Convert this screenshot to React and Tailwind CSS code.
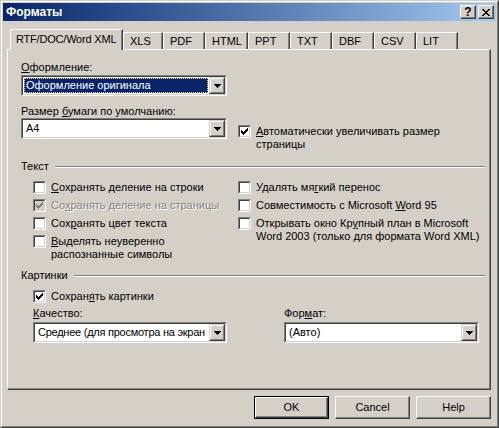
import React from "react";

const tabs = [
  { label: "RTF/DOC/Word XML", w: "w-[113px]", active: true },
  { label: "XLS", w: "w-[40px]" },
  { label: "PDF", w: "w-[42px]" },
  { label: "HTML", w: "w-[43px]" },
  { label: "PPT", w: "w-[42px]" },
  { label: "TXT", w: "w-[42px]" },
  { label: "DBF", w: "w-[42px]" },
  { label: "CSV", w: "w-[42px]" },
  { label: "LIT", w: "w-[42px]" }
];

function CheckMark({ color }) {
  // classic 7x7 pixel tick
  const px = [
    [6, 0], [5, 1], [6, 1], [0, 2], [4, 2], [5, 2], [6, 2],
    [0, 3], [1, 3], [3, 3], [4, 3], [5, 3], [0, 4], [1, 4], [2, 4], [3, 4], [4, 4],
    [1, 5], [2, 5], [3, 5], [2, 6]
  ];
  return (
    <svg width="7" height="7" viewBox="0 0 7 7" shapeRendering="crispEdges" className="block">
      {px.map(([x, y]) => (
        <rect key={`${x}-${y}`} x={x} y={y} width="1" height="1" fill={color} />
      ))}
    </svg>
  );
}

function Check({ checked, disabled }) {
  return (
    <span className="block h-[13px] w-[13px] shrink-0 border border-b-white border-l-[#808080] border-r-white border-t-[#808080]">
      <span
        className={[
          "flex h-full w-full items-center justify-center border border-b-[#d4d0c8] border-l-[#404040] border-r-[#d4d0c8] border-t-[#404040]",
          disabled ? "bg-[#d4d0c8]" : "bg-white"
        ].join(" ")}
      >
        {checked ? <CheckMark color={disabled ? "#808080" : "#000"} /> : null}
      </span>
    </span>
  );
}

function CheckRow({ checked, disabled, children, className = "" }) {
  return (
    <div className={["flex items-start gap-[5px]", className].join(" ")}>
      <Check checked={checked} disabled={disabled} />
      <span className={disabled ? "text-[#808080] [text-shadow:1px_1px_0_#fff]" : "text-black"}>{children}</span>
    </div>
  );
}

function Arrow() {
  return (
    <svg width="7" height="4" viewBox="0 0 7 4" shapeRendering="crispEdges" className="block">
      <rect x="0" y="0" width="7" height="1" fill="#000" />
      <rect x="1" y="1" width="5" height="1" fill="#000" />
      <rect x="2" y="2" width="3" height="1" fill="#000" />
      <rect x="3" y="3" width="1" height="1" fill="#000" />
    </svg>
  );
}

function Combo({ width, text, selected, tight }) {
  return (
    <div className={["h-[21px] shrink-0 border border-b-white border-l-[#808080] border-r-white border-t-[#808080]", width].join(" ")}>
      <div className="flex h-full w-full items-center border border-b-[#d4d0c8] border-l-[#404040] border-r-[#d4d0c8] border-t-[#404040] bg-white">
        <div className="flex h-full min-w-0 flex-1 items-center overflow-hidden p-px">
          {selected ? (
            <div className="flex h-full w-full items-center border border-dotted border-[#f5d77a] bg-[#0a246a] pl-px text-white">
              {text}
            </div>
          ) : (
            <span className={["whitespace-nowrap pl-[2px]", tight ? "tracking-[-0.25px]" : ""].join(" ")}>{text}</span>
          )}
        </div>
        <div className="h-[17px] w-[16px] shrink-0 border border-b-[#404040] border-l-[#d4d0c8] border-r-[#404040] border-t-[#d4d0c8]">
          <div className="flex h-full w-full items-center justify-center border border-b-[#808080] border-l-white border-r-[#808080] border-t-white bg-[#d4d0c8]">
            <Arrow />
          </div>
        </div>
      </div>
    </div>
  );
}

function GroupHeader({ children }) {
  return (
    <div className="flex items-center">
      <span>{children}</span>
      <div className="ml-[6px] flex-1 border-b border-t border-b-white border-t-[#808080]" />
    </div>
  );
}

function Button({ children, isDefault }) {
  const bevel = (
    <div className="flex h-full w-full items-center justify-center border border-b-[#404040] border-l-white border-r-[#404040] border-t-white shadow-[inset_-1px_-1px_0_#808080]">
      {children}
    </div>
  );
  return (
    <button type="button" className="h-[23px] w-[75px] bg-[#d4d0c8] p-0 text-[11px] text-black">
      {isDefault ? <div className="h-full w-full border border-black">{bevel}</div> : bevel}
    </button>
  );
}

function CaptionButton({ children }) {
  return (
    <div className="h-[14px] w-[16px] border border-b-[#404040] border-l-white border-r-[#404040] border-t-white bg-[#d4d0c8] shadow-[inset_-1px_-1px_0_#808080]">
      <div className="flex h-full w-full items-center justify-center">{children}</div>
    </div>
  );
}

function CloseGlyph() {
  const rows = ["##....##", ".##..##.", "..####..", "...##...", "..####..", ".##..##.", "##....##"];
  return (
    <svg width="8" height="7" viewBox="0 0 8 7" shapeRendering="crispEdges" className="block">
      {rows.map((row, y) =>
        row.split("").map((c, x) => (c === "#" ? <rect key={`${x}-${y}`} x={x} y={y} width="1" height="1" fill="#000" /> : null))
      )}
    </svg>
  );
}

export default function App() {
  return (
    <div className="h-[428px] w-[499px] border border-b-[#404040] border-l-[#d4d0c8] border-r-[#404040] border-t-[#d4d0c8] bg-[#d4d0c8] font-['Liberation_Sans',Arial,sans-serif] text-[11px] leading-[13px] text-black">
      <div className="flex h-full flex-col border border-b-[#808080] border-l-white border-r-[#808080] border-t-white p-px">
        {/* caption */}
        <div className="flex h-[18px] items-center bg-gradient-to-r from-[#0a246a] to-[#a6caf0] pl-[3px] pr-[2px]">
          <span className="flex-1 text-[12px] font-bold text-white">Форматы</span>
          <div className="flex gap-[2px]">
            <CaptionButton>
              <span className="text-[12px] font-bold leading-none">?</span>
            </CaptionButton>
            <CaptionButton>
              <CloseGlyph />
            </CaptionButton>
          </div>
        </div>

        <div className="ml-[4px] mt-[8px] w-[484px]">
          {/* tabs */}
          <div className="flex h-[20px] items-end pl-[3px]">
            {tabs.map((t) =>
              t.active ? (
                <div
                  key={t.label}
                  className={["relative z-10 -mb-px h-[21px] shrink-0 rounded-tl-[2px] border-l border-r border-t border-l-white border-r-[#404040] border-t-white bg-[#d4d0c8] pl-[5px] pt-[3px] tracking-[-0.2px] shadow-[inset_-1px_0_0_#808080]", t.w].join(" ")}
                >
                  {t.label}
                </div>
              ) : (
                <div
                  key={t.label}
                  className={["h-[17px] shrink-0 rounded-tl-[2px] border-l border-r border-t border-l-white border-r-[#404040] border-t-white pl-[6px] pt-[2px] shadow-[inset_-1px_0_0_#808080]", t.w].join(" ")}
                >
                  {t.label}
                </div>
              )
            )}
          </div>

          {/* page */}
          <div className="h-[341px] border border-b-[#404040] border-l-white border-r-[#404040] border-t-white pl-[13px] pr-[5px] pt-[11px] shadow-[inset_-1px_-1px_0_#808080]">
            <div>
              <u>О</u>формление:
            </div>
            <div className="mt-px">
              <Combo width="w-[206px]" text="Оформление оригинала" selected />
            </div>
            <div className="mt-[9px]">
              Размер <u>б</u>умаги по умолчанию:
            </div>
            <div className="flex items-start">
              <Combo width="w-[206px]" text="A4" />
              <CheckRow checked className="ml-[11px] mt-[7px]">
                <u>А</u>втоматически увеличивать размер
                <br />
                страницы
              </CheckRow>
            </div>

            <div className="mt-[9px]">
              <GroupHeader>Текст</GroupHeader>
            </div>
            <div className="mt-[8px] flex pl-[12px]">
              <div className="flex w-[205px] flex-col gap-[5px]">
                <CheckRow>
                  <u>С</u>охранять деление на строки
                </CheckRow>
                <CheckRow checked disabled>
                  Со<u>х</u>ранять деление на страницы
                </CheckRow>
                <CheckRow>
                  Сох<u>р</u>анять цвет текста
                </CheckRow>
                <CheckRow>
                  <u>В</u>ыделять неуверенно
                  <br />
                  распознанные символы
                </CheckRow>
              </div>
              <div className="flex flex-col gap-[5px]">
                <CheckRow>
                  Удалять мя<u>г</u>кий перенос
                </CheckRow>
                <CheckRow>
                  Совместимость с Microsoft <u>W</u>ord 95
                </CheckRow>
                <CheckRow>
                  Открывать окно Кр<u>у</u>пный план в Microsoft
                  <br />
                  Word 2003 (только для формата Word XML)
                </CheckRow>
              </div>
            </div>

            <div className="mt-[8px]">
              <GroupHeader>Картинки</GroupHeader>
            </div>
            <div className="pl-[12px]">
              <CheckRow checked className="mt-[8px]">
                Сохран<u>я</u>ть картинки
              </CheckRow>
              <div className="mt-[4px] flex">
                <div className="w-[251px]">
                  <div>
                    <u>К</u>ачество:
                  </div>
                  <div className="mt-[2px]">
                    <Combo width="w-[194px]" text="Среднее (для просмотра на экран" tight />
                  </div>
                </div>
                <div>
                  <div>
                    Фор<u>м</u>ат:
                  </div>
                  <div className="mt-[2px]">
                    <Combo width="w-[195px]" text="(Авто)" />
                  </div>
                </div>
              </div>
            </div>
          </div>

          {/* buttons */}
          <div className="mt-[6px] flex justify-end gap-[6px]">
            <Button isDefault>OK</Button>
            <Button>Cancel</Button>
            <Button>Help</Button>
          </div>
        </div>
      </div>
    </div>
  );
}
